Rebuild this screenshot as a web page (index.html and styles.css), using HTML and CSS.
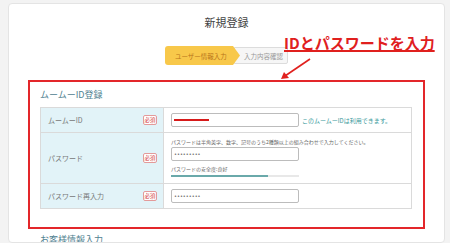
FILE: index.html
```html
<!DOCTYPE html>
<html lang="ja">
<head>
  <meta charset="UTF-8" />
  <meta name="viewport" content="width=device-width, initial-scale=1.0"/>
  <title>新規登録</title>
  <link rel="stylesheet" href="styles.css">
</head>
<body>

  <div class="card">
    <h1 class="page-title">新規登録</h1>

    <div class="steps">
      <div class="step step-active">ユーザー情報入力</div>
      <div class="step step-next">入力内容確認</div>
    </div>

    <!-- annotation -->
    <p class="note">IDとパスワードを入力</p>
    <svg class="note-arrow" width="32" height="22" viewBox="0 0 32 22">
      <line x1="30" y1="1" x2="5" y2="18" stroke="#e0201e" stroke-width="1.6"/>
      <polygon points="1,21 4,14 9,20" fill="#e0201e"/>
    </svg>

    <div class="highlight">
      <h2 class="section-title">ムームーID登録</h2>
      <table class="form-table">
        <tr class="row-short">
          <th><div class="label"><span>ムームーID</span><span class="badge">必須</span></div></th>
          <td>
            <div class="line-inline">
              <div class="field"><span class="redact"></span></div>
              <span class="ok-msg">このムームーIDは利用できます。</span>
            </div>
          </td>
        </tr>
        <tr>
          <th><div class="label"><span>パスワード</span><span class="badge">必須</span></div></th>
          <td class="pass-cell">
            <p class="hint">パスワードは半角英字、数字、記号のうち2種類以上の組み合わせで入力してください。</p>
            <div class="field"><span class="dots">•••••••••</span></div>
            <p class="strength">パスワードの安全度:良好</p>
            <div class="meter"><div class="meter-fill" style="width: 76%"></div></div>
          </td>
        </tr>
        <tr class="row-short">
          <th><div class="label"><span>パスワード再入力</span><span class="badge">必須</span></div></th>
          <td><div class="field"><span class="dots">•••••••••</span></div></td>
        </tr>
      </table>
    </div>

    <h2 class="section-title next-section">お客様情報入力</h2>
  </div>

</body>
</html>
```

FILE: styles.css
```css
* {
  margin: 0;
  padding: 0;
  box-sizing: border-box;
}

body {
  background-color: #f3f3f3;
  font-family: "Noto Sans CJK JP", "Noto Sans", sans-serif;
  height: 243px;
  overflow: hidden;
}

.card {
  position: relative;
  width: 437px;
  margin: 3px 0 0 8px;
  background-color: white;
  border: 1px solid #e4e4e4;
  border-radius: 4px;
  padding-top: 11px;
  height: 240px;
  overflow: hidden;
}

.page-title {
  font-size: 11px;
  font-weight: normal;
  line-height: 14px;
  text-align: center;
  color: #444;
}

.steps {
  display: flex;
  justify-content: center;
  align-items: center;
  margin-top: 17px;
  height: 19px;
}

.step {
  font-size: 6.5px;
  white-space: nowrap;
  display: flex;
  align-items: center;
}

.step-active {
  position: relative;
  z-index: 1;
  height: 19px;
  width: 75px;
  padding-left: 10px;
  background-color: #f8c84a;
  color: #b8741a;
  border-radius: 3px 0 0 3px;
  clip-path: polygon(0 0, 68px 0, 75px 50%, 68px 100%, 0 100%);
}

.step-next {
  height: 17px;
  margin-left: -6px;
  padding: 0 4px 0 9px;
  background-color: #f6f6f6;
  border: 1px solid #dcdcdc;
  border-radius: 0 2px 2px 0;
  color: #999;
}

.note {
  position: absolute;
  left: 275px;
  top: 30px;
  font-size: 15px;
  line-height: 18px;
  font-weight: bold;
  color: #e0201e;
  text-decoration: underline;
  text-decoration-thickness: 1.5px;
  text-underline-offset: 1px;
}

.note-arrow {
  position: absolute;
  left: 271px;
  top: 54px;
}

.highlight {
  width: 397px;
  margin: 15px 0 0 19px;
  border: 2px solid #e3262a;
  padding: 7px 10px 18px 10px;
}

.section-title {
  font-size: 9px;
  font-weight: normal;
  line-height: 12px;
  color: #4f8190;
}

.highlight .section-title {
  margin-bottom: 6px;
}

.next-section {
  margin: 5px 0 0 31px;
}

.form-table {
  width: 372px;
  border-collapse: collapse;
  border: 1px solid #dadada;
}

.form-table tr {
  border-bottom: 1px solid #dadada;
}

.form-table th {
  width: 123px;
  background-color: #e2f3f8;
  border-right: 1px solid #dadada;
  font-weight: normal;
  font-size: 7px;
  color: #777;
  text-align: left;
  padding: 0 6px 0 7px;
  vertical-align: middle;
}

.label {
  display: flex;
  justify-content: space-between;
  align-items: center;
}

.badge {
  display: block;
  width: 14px;
  height: 10px;
  line-height: 8px;
  text-align: center;
  font-size: 5.5px;
  color: #d23a3a;
  border: 1px solid #e39a9a;
  border-radius: 2px;
  background-color: white;
}

.form-table td {
  padding: 0 7px;
  vertical-align: middle;
}

.row-short {
  height: 25px;
}

.line-inline {
  display: flex;
  align-items: center;
  gap: 3px;
}

.field {
  width: 128px;
  height: 14px;
  border: 1px solid #bcbcbc;
  border-radius: 2px;
  background-color: white;
  display: flex;
  align-items: center;
  padding-left: 2px;
}

.redact {
  display: block;
  width: 35px;
  height: 2px;
  background-color: #d71a1a;
}

.dots {
  font-family: "DejaVu Sans", sans-serif;
  font-size: 5px;
  line-height: 6px;
  color: #555;
}

.ok-msg {
  font-size: 6px;
  color: #3a9a9c;
  white-space: nowrap;
}

.form-table td.pass-cell {
  padding: 4px 7px 6px 7px;
}

.hint {
  font-size: 5px;
  line-height: 9px;
  color: #666;
  white-space: nowrap;
  margin-bottom: 1px;
}

.strength {
  font-size: 5px;
  line-height: 8px;
  color: #666;
  margin-top: 4px;
}

.meter {
  width: 128px;
  height: 2px;
  background-color: #e8e8e8;
  margin-top: 2px;
}

.meter-fill {
  height: 100%;
  background-color: #6aa9aa;
}
```
